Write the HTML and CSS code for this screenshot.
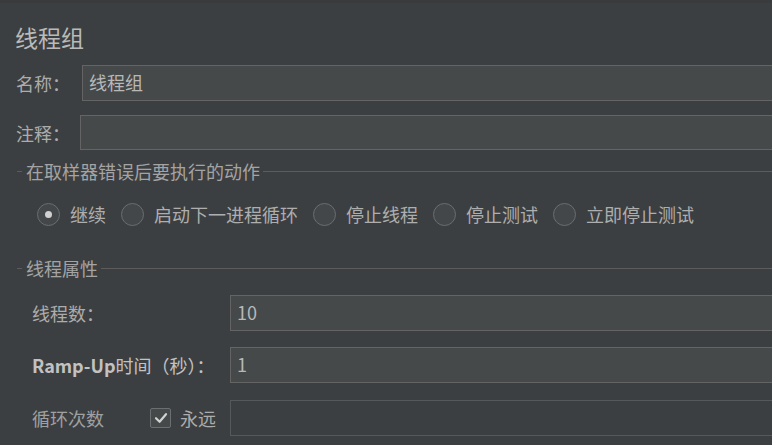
FILE: index.html
```html
<!DOCTYPE html>
<html lang="zh">
<head>
<meta charset="utf-8">
<link rel="stylesheet" href="styles.css">
</head>
<body>
<div class="page">
  <div class="topstrip"></div>
  <div class="title">线程组</div>

  <div class="row row-name">
    <label class="lbl lbl-name">名称：</label>
    <div class="field">线程组</div>
  </div>
  <div class="row row-comment">
    <label class="lbl lbl-comment">注释：</label>
    <div class="field field-comment"></div>
  </div>

  <div class="section sec-error">
    <span class="dash"></span>
    <span class="sec-text">在取样器错误后要执行的动作</span>
    <span class="rule"></span>
  </div>

  <div class="radios">
    <div class="radio-item"><span class="radio on"></span><span>继续</span></div>
    <div class="radio-item"><span class="radio"></span><span>启动下一进程循环</span></div>
    <div class="radio-item"><span class="radio"></span><span>停止线程</span></div>
    <div class="radio-item"><span class="radio"></span><span>停止测试</span></div>
    <div class="radio-item"><span class="radio"></span><span>立即停止测试</span></div>
  </div>

  <div class="section sec-props">
    <span class="dash"></span>
    <span class="sec-text">线程属性</span>
    <span class="rule"></span>
  </div>

  <div class="props">
    <div class="prow prow-1">
      <div class="plabel">线程数：</div>
      <div class="field">10</div>
    </div>
    <div class="prow prow-2">
      <div class="plabel bright"><b>Ramp-Up</b>时间（秒）：</div>
      <div class="field">1</div>
    </div>
    <div class="prow prow-3">
      <div class="plabel loop">
        <span class="loop-text">循环次数</span>
        <span class="checkbox">
          <svg width="16" height="16" viewBox="0 0 16 16"><path d="M3 8.2 L6.6 11.8 L13 4.2" fill="none" stroke="#d2d2d2" stroke-width="2.2" stroke-linecap="round" stroke-linejoin="round"/></svg>
        </span>
        <span class="forever">永远</span>
      </div>
      <div class="field disabled"></div>
    </div>
  </div>
</div>
</body>
</html>
```

FILE: styles.css
```css
html, body {
  margin: 0;
  padding: 0;
  background: #3c3f41;
  overflow: hidden;
}
body {
  width: 772px;
  height: 445px;
  font-family: "Noto Sans CJK SC", "Noto Sans", sans-serif;
  font-size: 18px;
  color: #b0b0b0;
}
.page {
  width: 772px;
  overflow: hidden;
}
.topstrip {
  height: 3px;
  background: #393b3d;
}
.title {
  font-size: 23px;
  line-height: 30px;
  height: 30px;
  margin-top: 19px;
  padding-left: 15px;
  color: #bababa;
}
.row {
  display: flex;
  align-items: center;
}
.row-name {
  margin-top: 13px;
}
.row-comment {
  margin-top: 14px;
}
.lbl {
  box-sizing: border-box;
  padding-left: 16px;
  line-height: 24px;
  color: #acacac;
}
.lbl-name { width: 82px; }
.lbl-comment { width: 80px; }
.field {
  flex: 1;
  box-sizing: border-box;
  height: 36px;
  margin-right: -12px;
  border: 1px solid #646464;
  background: #45494a;
  padding-left: 6px;
  line-height: 33px;
  color: #b8b8b8;
}
.field-comment {
  height: 35px;
}
.section {
  display: flex;
  align-items: center;
  height: 24px;
  line-height: 24px;
  padding-left: 17px;
  color: #a4a4a4;
}
.sec-error { margin-top: 9px; }
.sec-props { margin-top: 30px; }
.dash {
  width: 5px;
  height: 1px;
  background: #5c5c5c;
}
.sec-text {
  margin-left: 4px;
}
.rule {
  flex: 1;
  height: 1px;
  margin-left: 3px;
  background: #5c5c5c;
}
.radios {
  display: flex;
  align-items: center;
  gap: 15px;
  height: 24px;
  line-height: 24px;
  margin-top: 19px;
  padding-left: 37px;
}
.radio-item {
  display: flex;
  align-items: center;
  color: #aeaeae;
}
.radio {
  box-sizing: border-box;
  width: 23px;
  height: 23px;
  margin-right: 10px;
  border-radius: 50%;
  border: 1.5px solid #6b6e70;
  background: #43474a;
  display: flex;
  align-items: center;
  justify-content: center;
}
.radio.on::after {
  content: "";
  width: 7px;
  height: 7px;
  border-radius: 50%;
  background: #d0d0d0;
}
.props {
  margin-top: 15px;
  padding-left: 32px;
}
.prow {
  display: flex;
  align-items: center;
  height: 36px;
}
.prow-2 { margin-top: 16px; }
.prow-3 { margin-top: 17px; }
.plabel {
  width: 198px;
  line-height: 24px;
  color: #acacac;
}
.plabel.bright {
  color: #c2c2c2;
}
.plabel b {
  font-weight: 700;
}
.loop {
  display: flex;
  align-items: center;
}
.loop-text {
  width: 118px;
  color: #a0a0a0;
}
.checkbox {
  box-sizing: border-box;
  width: 21px;
  height: 20px;
  margin-right: 9px;
  border: 1.5px solid #6c6f71;
  border-radius: 2px;
  background: #45494a;
  display: flex;
  align-items: center;
  justify-content: center;
}
.forever {
  color: #acacac;
}
.field.disabled {
  background: #3c3f41;
  border-color: #56595b;
}
```
